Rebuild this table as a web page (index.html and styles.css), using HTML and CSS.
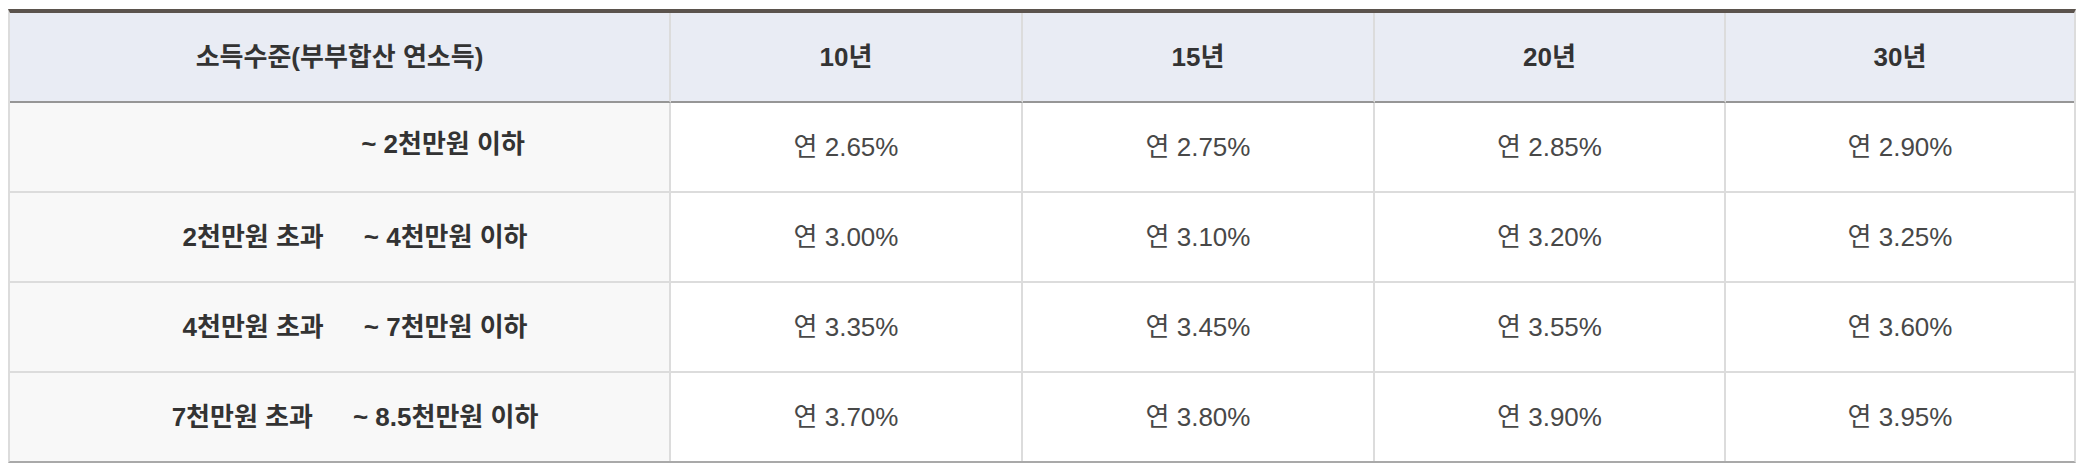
FILE: index.html
```html
<!DOCTYPE html>
<html lang="ko">
<head>
<meta charset="utf-8">
<title>소득수준별 금리</title>
<link rel="stylesheet" href="styles.css">
</head>
<body>
<table class="rate-table">
  <colgroup>
    <col class="col-income">
    <col class="col-term">
    <col class="col-term">
    <col class="col-term-4">
    <col class="col-term-last">
  </colgroup>
  <thead>
    <tr>
      <th>소득수준(부부합산 연소득)</th>
      <th>10년</th>
      <th>15년</th>
      <th>20년</th>
      <th>30년</th>
    </tr>
  </thead>
  <tbody>
    <tr>
      <th class="income"><span class="range"><span class="lo"></span><span class="hi">~ 2천만원 이하</span></span></th>
      <td>연 2.65%</td>
      <td>연 2.75%</td>
      <td>연 2.85%</td>
      <td>연 2.90%</td>
    </tr>
    <tr>
      <th class="income"><span class="range"><span class="lo">2천만원 초과</span><span class="hi">~ 4천만원 이하</span></span></th>
      <td>연 3.00%</td>
      <td>연 3.10%</td>
      <td>연 3.20%</td>
      <td>연 3.25%</td>
    </tr>
    <tr>
      <th class="income"><span class="range"><span class="lo">4천만원 초과</span><span class="hi">~ 7천만원 이하</span></span></th>
      <td>연 3.35%</td>
      <td>연 3.45%</td>
      <td>연 3.55%</td>
      <td>연 3.60%</td>
    </tr>
    <tr>
      <th class="income"><span class="range"><span class="lo">7천만원 초과</span><span class="hi">~ 8.5천만원 이하</span></span></th>
      <td>연 3.70%</td>
      <td>연 3.80%</td>
      <td>연 3.90%</td>
      <td>연 3.95%</td>
    </tr>
  </tbody>
</table>
</body>
</html>
```

FILE: styles.css
```css
html, body {
  background: #ffffff;
}

body {
  margin: 8px;
  font-family: "Liberation Sans", "Noto Sans CJK KR", sans-serif;
}

.rate-table {
  width: 2068px;
  margin-top: 1px;
  table-layout: fixed;
  border-collapse: separate;
  border-spacing: 0;
  border-top: 4px solid #5b534d;
  border-left: 2px solid #dcdcdc;
  border-right: 2px solid #dcdcdc;
  border-bottom: 2px solid #a9a9a9;
  font-size: 26px;
}

.col-income { width: 661px; }
.col-term { width: 352px; }
.col-term-4 { width: 351px; }
.col-term-last { width: 348px; }

.rate-table th,
.rate-table td {
  padding: 0;
  height: 88px;
  text-align: center;
  vertical-align: middle;
  border-right: 2px solid #dcdcdc;
  border-bottom: 2px solid #dcdcdc;
  line-height: 30px;
}

.rate-table th:last-child,
.rate-table td:last-child {
  border-right: 0;
}

.rate-table tbody tr:last-child th,
.rate-table tbody tr:last-child td {
  border-bottom: 0;
}

.rate-table thead th {
  background: #e9ecf4;
  color: #333333;
  font-weight: bold;
  border-bottom-color: #969696;
}

.rate-table tbody th.income {
  background: #f8f8f8;
  color: #333333;
  font-weight: bold;
  padding-left: 31px;
}

.rate-table tbody td {
  background: #ffffff;
  color: #484848;
  font-weight: normal;
}

.range {
  display: inline-flex;
  gap: 40px;
  white-space: nowrap;
}

.range .lo {
  min-width: 136px;
  text-align: right;
}
```
